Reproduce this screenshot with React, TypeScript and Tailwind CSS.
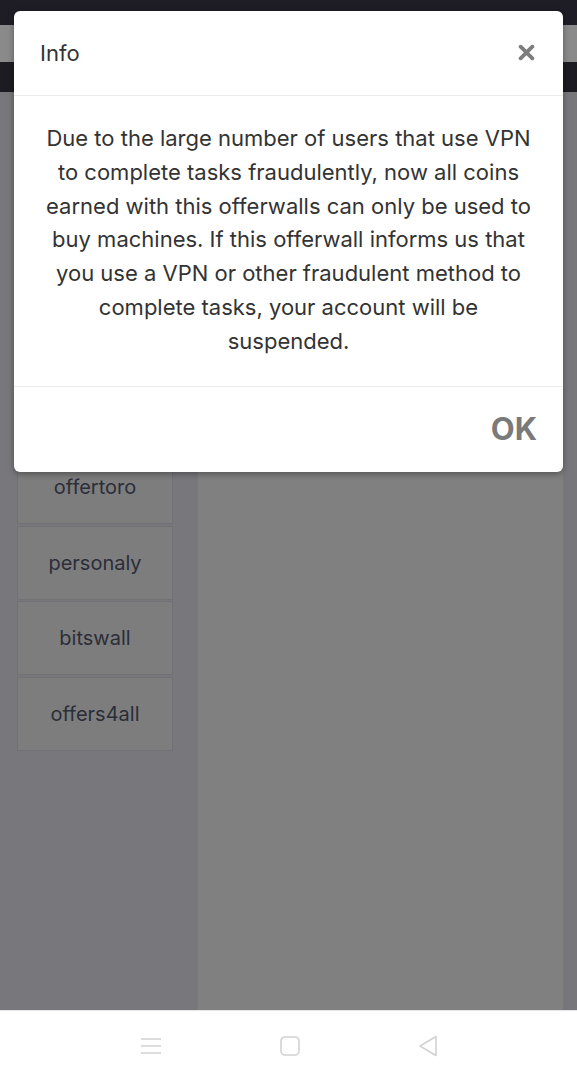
import { useState } from 'react';

const offerwalls = ['offertoro', 'personaly', 'bitswall', 'offers4all'];

function CloseIcon() {
  return (
    <svg viewBox="0 0 16 16" className="h-[17px] w-[17px]">
      <path d="M2.5 2.5 L13.5 13.5 M13.5 2.5 L2.5 13.5" stroke="#7d7d7d" strokeWidth="3.6" strokeLinecap="round" />
    </svg>
  );
}

// Android style navigation bar
function NavBar() {
  return (
    <div className="flex h-[70px] items-center justify-center gap-[116px] border-t border-[#e6e6e6] bg-white">
      <svg viewBox="0 0 24 20" className="h-[20px] w-[24px]">
        <path d="M2 3 H22 M2 10 H22 M2 17 H22" stroke="#d2d2d2" strokeWidth="1.6" />
      </svg>
      <svg viewBox="0 0 22 22" className="h-[22px] w-[22px]">
        <rect x="2" y="2" width="18" height="18" rx="4" fill="none" stroke="#d2d2d2" strokeWidth="1.6" />
      </svg>
      <svg viewBox="0 0 22 24" className="h-[24px] w-[22px]">
        <path d="M19 2.5 V21.5 L3 12 Z" fill="none" stroke="#d2d2d2" strokeWidth="1.6" strokeLinejoin="round" />
      </svg>
    </div>
  );
}

export default function App() {
  const [open, setOpen] = useState(true);

  return (
    <div className="relative h-[1080px] w-[577px] overflow-hidden bg-[#808080] font-['Inter',sans-serif]">
      {/* status bar + dimmed header */}
      <div className="h-[25px] bg-[#1e1d25]" />
      <div className="h-[37px] bg-[#8a8a8a]" />
      <div className="h-[30px] bg-[#1c1b22]" />

      {/* page under the overlay */}
      <div className="flex h-[918px]">
        <aside className="flex w-[198px] flex-col gap-[1.5px] bg-[#78777c] pl-[17px] pr-[25px] pt-[358px]">
          {offerwalls.map((name) => (
            <button
              key={name}
              className="flex h-[74px] items-center justify-center border border-[#717174] bg-[#7d7d7e] text-[20px] text-[#2b2e38]"
            >
              {name}
            </button>
          ))}
        </aside>
        <main className="flex-1 bg-[#808080]" />
        <div className="w-[14px] bg-[#77777b]" />
      </div>

      <NavBar />

      {/* Info modal */}
      {open && (
        <div className="absolute left-[14px] top-[11px] w-[549px] rounded-[6px] bg-white shadow-[0_2px_6px_rgba(0,0,0,0.35)]">
          <div className="flex h-[85px] items-center justify-between border-b border-[#ececec] px-[26px]">
            <span className="text-[22px] text-[#333]">Info</span>
            <button onClick={() => setOpen(false)} className="-mt-[2px] mr-[2px]">
              <CloseIcon />
            </button>
          </div>
          <div className="border-b border-[#ececec] px-[26px] pb-[27px] pt-[26px] text-center text-[22px] leading-[33.8px] text-[#333]">
            Due to the large number of users that use VPN to complete tasks fraudulently, now all coins earned with this
            offerwalls can only be used to buy machines. If this offerwall informs us that you use a VPN or other
            fraudulent method to complete tasks, your account will be suspended.
          </div>
          <div className="flex h-[85px] items-center justify-end px-[26px]">
            <button onClick={() => setOpen(false)} className="text-[31px] font-bold text-[#7a7a7a]">
              OK
            </button>
          </div>
        </div>
      )}
    </div>
  );
}
